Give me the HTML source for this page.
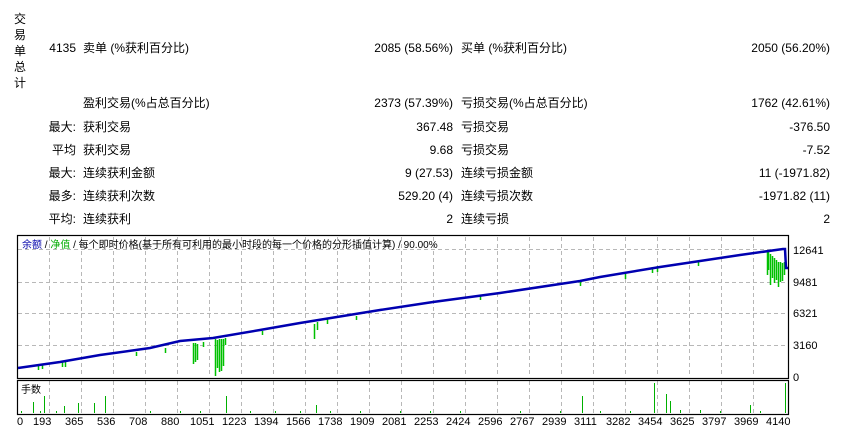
<!DOCTYPE html>
<html><head><meta charset="utf-8"><style>
*{margin:0;padding:0}
body{width:844px;height:436px;background:#fff;position:relative;overflow:hidden;font-family:"Liberation Sans","Noto Sans CJK SC",sans-serif;font-size:12px;color:#000}
.t{position:absolute;white-space:nowrap;line-height:14px}
.r{text-align:right}
.ax{position:absolute;font-size:11px;line-height:12px;white-space:nowrap}
</style></head><body>
<div class="t" style="left:14px;top:11px;line-height:16px;width:14px">交<br>易<br>单<br>总<br>计</div>

<div class="t r" style="left:20px;width:56px;top:41px">4135</div>
<div class="t" style="left:83px;top:41px">卖单 (%获利百分比)</div>
<div class="t r" style="left:300px;width:153px;top:41px">2085 (58.56%)</div>
<div class="t" style="left:461px;top:41px">买单 (%获利百分比)</div>
<div class="t r" style="left:640px;width:190px;top:41px">2050 (56.20%)</div>

<div class="t" style="left:83px;top:96px">盈利交易(%占总百分比)</div>
<div class="t r" style="left:300px;width:153px;top:96px">2373 (57.39%)</div>
<div class="t" style="left:461px;top:96px">亏损交易(%占总百分比)</div>
<div class="t r" style="left:640px;width:190px;top:96px">1762 (42.61%)</div>

<div class="t r" style="left:20px;width:56px;top:120px">最大:</div>
<div class="t" style="left:83px;top:120px">获利交易</div>
<div class="t r" style="left:300px;width:153px;top:120px">367.48</div>
<div class="t" style="left:461px;top:120px">亏损交易</div>
<div class="t r" style="left:640px;width:190px;top:120px">-376.50</div>

<div class="t r" style="left:20px;width:56px;top:143px">平均</div>
<div class="t" style="left:83px;top:143px">获利交易</div>
<div class="t r" style="left:300px;width:153px;top:143px">9.68</div>
<div class="t" style="left:461px;top:143px">亏损交易</div>
<div class="t r" style="left:640px;width:190px;top:143px">-7.52</div>

<div class="t r" style="left:20px;width:56px;top:166px">最大:</div>
<div class="t" style="left:83px;top:166px">连续获利金额</div>
<div class="t r" style="left:300px;width:153px;top:166px">9 (27.53)</div>
<div class="t" style="left:461px;top:166px">连续亏损金额</div>
<div class="t r" style="left:640px;width:190px;top:166px">11 (-1971.82)</div>

<div class="t r" style="left:20px;width:56px;top:189px">最多:</div>
<div class="t" style="left:83px;top:189px">连续获利次数</div>
<div class="t r" style="left:300px;width:153px;top:189px">529.20 (4)</div>
<div class="t" style="left:461px;top:189px">连续亏损次数</div>
<div class="t r" style="left:640px;width:190px;top:189px">-1971.82 (11)</div>

<div class="t r" style="left:20px;width:56px;top:212px">平均:</div>
<div class="t" style="left:83px;top:212px">连续获利</div>
<div class="t r" style="left:300px;width:153px;top:212px">2</div>
<div class="t" style="left:461px;top:212px">连续亏损</div>
<div class="t r" style="left:640px;width:190px;top:212px">2</div>

<svg style="position:absolute;left:0;top:0" width="844" height="436">
<g stroke="#b8b8b8" stroke-dasharray="4,3" stroke-width="1" shape-rendering="crispEdges">
<line x1="18" y1="249.5" x2="787" y2="249.5"/><line x1="18" y1="282.5" x2="787" y2="282.5"/>
<line x1="18" y1="313.5" x2="787" y2="313.5"/><line x1="18" y1="345.5" x2="787" y2="345.5"/>
<path d="M49.5 237V377M81.5 237V377M113.5 237V377M145.5 237V377M177.5 237V377M209.5 237V377M241.5 237V377M273.5 237V377M305.5 237V377M337.5 237V377M369.5 237V377M401.5 237V377M433.5 237V377M465.5 237V377M497.5 237V377M529.5 237V377M561.5 237V377M593.5 237V377M625.5 237V377M657.5 237V377M689.5 237V377M721.5 237V377M753.5 237V377"/>
<path d="M49.5 381V413M81.5 381V413M113.5 381V413M145.5 381V413M177.5 381V413M209.5 381V413M241.5 381V413M273.5 381V413M305.5 381V413M337.5 381V413M369.5 381V413M401.5 381V413M433.5 381V413M465.5 381V413M497.5 381V413M529.5 381V413M561.5 381V413M593.5 381V413M625.5 381V413M657.5 381V413M689.5 381V413M721.5 381V413M753.5 381V413"/>
</g>
<rect x="17.5" y="235.5" width="771" height="143" fill="none" stroke="#000" stroke-width="1.2"/>
<rect x="17.5" y="380.5" width="771" height="34" fill="none" stroke="#000" stroke-width="1.2"/>
<g stroke="#00c000" stroke-width="1.5" fill="none">
<path d="M38.5 365V370M42.5 364V369M62.5 362V367M65.5 362V367M136.5 352V356M165.5 348V353M193.5 343V364M195.5 343V362M197.5 344V360M203.5 342V347M215.5 339V376M217.5 340V368M219.5 339V372M221.5 339V371M223.5 339V366M225.5 338V345M262.5 331V335M314.5 324V339M317.5 322V330M327.5 319V324M356.5 316V320M480.5 296V300M580.5 281V286M625.5 274V279M652.5 267V273M657.5 266V272M698.5 261V266M767.5 251V275M768.5 252V270M770.5 254V285M772.5 256V278M774.5 258V283M776.5 260V280M778.5 262V287M780.5 262V282M782.5 263V281M784.5 262V275"/>
</g>
<polyline fill="none" stroke="#0000b0" stroke-width="2.5" points="18,368 60,362 100,355 150,348 180,341 213,338 260,330 300,323 380,310 433,302 500,293 580,281 600,277 660,267 740,255 783,249 785,249 786,268 788,268"/>
<g stroke="#00b000" stroke-width="1" shape-rendering="crispEdges">
<path d="M33.5 413V402M44.5 413V396M64.5 413V406M78.5 413V403M94.5 413V403M105.5 413V396M226.5 413V396M316.5 413V405M582.5 413V396M654.5 413V383M666.5 413V394M670.5 413V401M750.5 413V405M785.5 413V383M21.5 413V411M40.5 413V411M56.5 413V411M150.5 413V411M180.5 413V411M200.5 413V411M250.5 413V411M275.5 413V411M300.5 413V411M330.5 413V411M360.5 413V411M400.5 413V411M430.5 413V411M460.5 413V411M520.5 413V411M560.5 413V411M600.5 413V411M630.5 413V411M680.5 413V410M700.5 413V410M720.5 413V411M760.5 413V411"/>
</g>
</svg>
<div class="ax" style="left:22px;top:240px;font-size:10px"><span style="color:#0000aa">余额</span> / <span style="color:#00aa00">净值</span> / 每个即时价格(基于所有可利用的最小时段的每一个价格的分形插值计算) / 90.00%</div>
<div class="ax" style="left:21px;top:385px;font-size:10px">手数</div>
<div class="ax" style="left:793px;top:245px">12641</div>
<div class="ax" style="left:793px;top:277px">9481</div>
<div class="ax" style="left:793px;top:308px">6321</div>
<div class="ax" style="left:793px;top:340px">3160</div>
<div class="ax" style="left:793px;top:372px">0</div>
<div class="ax" style="left:17px;top:416px">0</div>
<div class="ax" style="top:416px;left:0;width:844px">
<span style="position:absolute;left:33px">193</span><span style="position:absolute;left:65px">365</span><span style="position:absolute;left:97px">536</span><span style="position:absolute;left:129px">708</span><span style="position:absolute;left:161px">880</span><span style="position:absolute;left:190px">1051</span><span style="position:absolute;left:222px">1223</span><span style="position:absolute;left:254px">1394</span><span style="position:absolute;left:286px">1566</span><span style="position:absolute;left:318px">1738</span><span style="position:absolute;left:350px">1909</span><span style="position:absolute;left:382px">2081</span><span style="position:absolute;left:414px">2253</span><span style="position:absolute;left:446px">2424</span><span style="position:absolute;left:478px">2596</span><span style="position:absolute;left:510px">2767</span><span style="position:absolute;left:542px">2939</span><span style="position:absolute;left:574px">3111</span><span style="position:absolute;left:606px">3282</span><span style="position:absolute;left:638px">3454</span><span style="position:absolute;left:670px">3625</span><span style="position:absolute;left:702px">3797</span><span style="position:absolute;left:734px">3969</span><span style="position:absolute;left:766px">4140</span>
</div>
</body></html>
